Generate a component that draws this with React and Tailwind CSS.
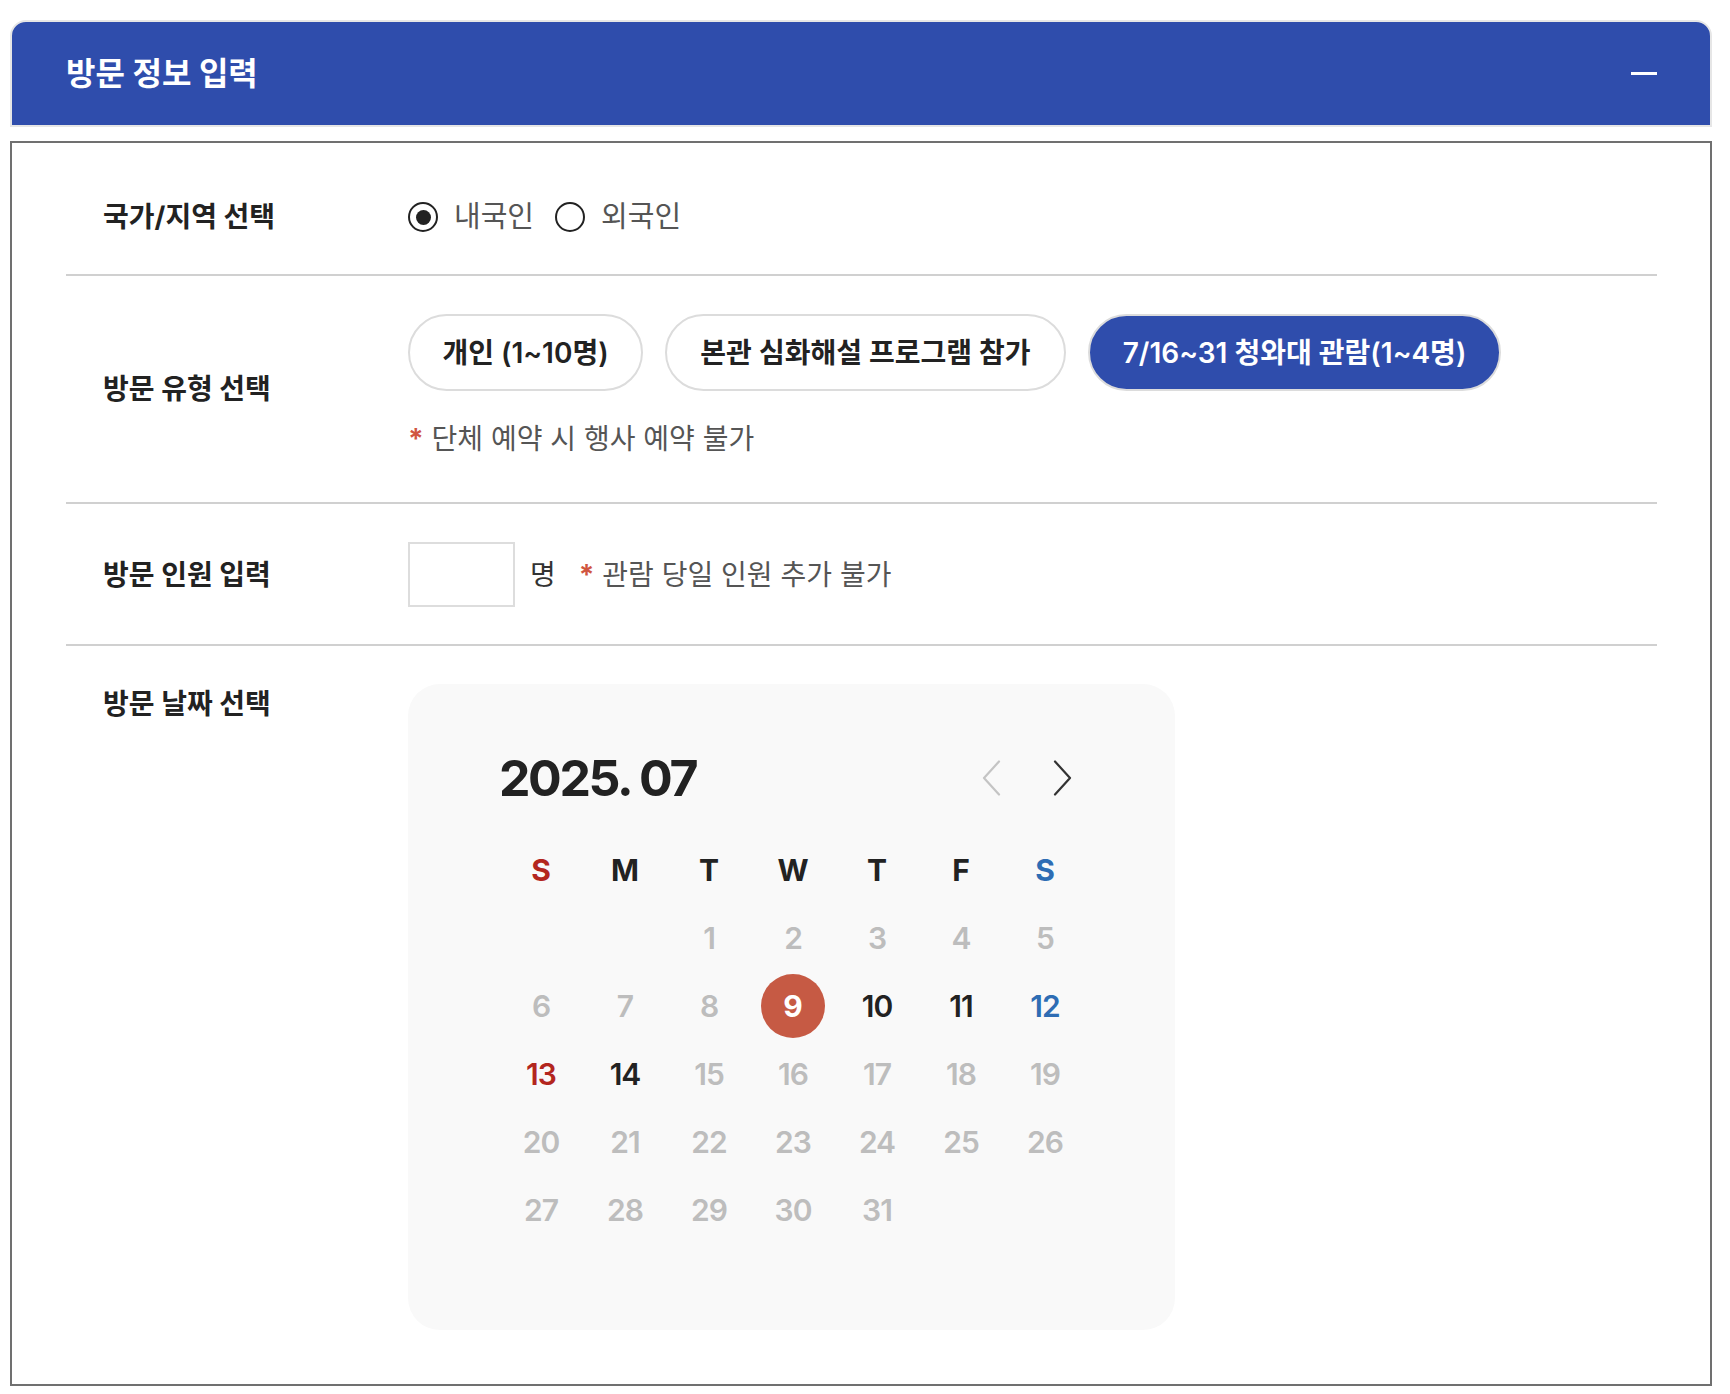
import React from "react";

function ChevronLeft({ className }) {
  return (
    <svg width="20" height="36" viewBox="0 0 20 36" fill="none" className={className}>
      <path d="M18 1.5 L3 18 L18 34.5" stroke="currentColor" strokeWidth="2.2" strokeLinecap="round" strokeLinejoin="round" />
    </svg>
  );
}

function ChevronRight({ className }) {
  return (
    <svg width="20" height="36" viewBox="0 0 20 36" fill="none" className={className}>
      <path d="M2 1.5 L17 18 L2 34.5" stroke="currentColor" strokeWidth="2.2" strokeLinecap="round" strokeLinejoin="round" />
    </svg>
  );
}

const weekdays = [
  { d: "S", c: "text-[#b3261e]" },
  { d: "M", c: "text-[#222222]" },
  { d: "T", c: "text-[#222222]" },
  { d: "W", c: "text-[#222222]" },
  { d: "T", c: "text-[#222222]" },
  { d: "F", c: "text-[#222222]" },
  { d: "S", c: "text-[#2e6db4]" },
];

function dayClass(n) {
  if (n === 10 || n === 11 || n === 14) return "text-[#222222]";
  if (n === 12) return "text-[#2e6db4]";
  if (n === 13) return "text-[#b3261e]";
  return "text-[#bdbdbd]";
}

export default function App() {
  const cells = [null, null];
  for (let i = 1; i <= 31; i++) cells.push(i);

  return (
    <div className="min-h-screen bg-white pt-[20px] font-[Inter,'Noto_Sans_CJK_KR',sans-serif]">
      <div className="ml-[10px] w-[1702px]">
        {/* Header */}
        <div className="flex h-[107px] items-center justify-between rounded-t-[16px] border-2 border-[#e6e6e6] bg-[#2f4dac] pl-[54px] pr-[53px]">
          <h2 className="text-[32px] font-bold leading-none text-white">방문 정보 입력</h2>
          <div className="h-[3px] w-[26px] bg-white" />
        </div>

        {/* Body */}
        <div className="mt-[14px] border-2 border-[#707070] pb-[16px] pl-[54px] pr-[53px] pt-[17px]">
          {/* Row 1 */}
          <div className="flex items-center border-b-2 border-[#d0d0d0] py-[38px]">
            <div className="w-[342px] shrink-0 pl-[37px] text-[28px] font-bold leading-[38px] text-[#222222]">
              국가/지역 선택
            </div>
            <div className="flex items-center">
              <span className="flex h-[30px] w-[30px] items-center justify-center rounded-full border-2 border-[#222222] bg-white">
                <span className="h-[15px] w-[15px] rounded-full bg-[#222222]" />
              </span>
              <span className="ml-[16px] text-[29px] leading-[38px] text-[#555555]">내국인</span>
              <span className="ml-[21px] h-[30px] w-[30px] rounded-full border-2 border-[#222222] bg-white" />
              <span className="ml-[16px] text-[29px] leading-[38px] text-[#555555]">외국인</span>
            </div>
          </div>

          {/* Row 2 */}
          <div className="flex items-center border-b-2 border-[#d0d0d0] py-[38px]">
            <div className="w-[342px] shrink-0 pl-[37px] text-[28px] font-bold leading-[38px] text-[#222222]">
              방문 유형 선택
            </div>
            <div className="flex flex-col">
              <div className="flex items-center gap-[22px]">
                <button className="flex h-[77px] w-[235px] items-center justify-center rounded-full border-2 border-[#dcdcdc] bg-white text-[28px] font-semibold text-[#222222]">
                  개인 (1~10명)
                </button>
                <button className="flex h-[77px] w-[401px] items-center justify-center rounded-full border-2 border-[#dcdcdc] bg-white text-[28px] font-semibold text-[#222222]">
                  본관 심화해설 프로그램 참가
                </button>
                <button className="flex h-[77px] w-[413px] items-center justify-center rounded-full border-2 border-[#dcdcdc] bg-[#2f4dac] text-[28px] font-semibold text-white">
                  7/16~31 청와대 관람(1~4명)
                </button>
              </div>
              <p className="mt-[23px] text-[28px] leading-[50px] text-[#555555]">
                <span className="font-bold text-[#d0553f]">*</span> 단체 예약 시 행사 예약 불가
              </p>
            </div>
          </div>

          {/* Row 3 */}
          <div className="flex items-center border-b-2 border-[#d0d0d0] pb-[37px] pt-[38px]">
            <div className="w-[342px] shrink-0 pl-[37px] text-[28px] font-bold leading-[38px] text-[#222222]">
              방문 인원 입력
            </div>
            <div className="flex items-center">
              <div className="h-[65px] w-[107px] border-2 border-[#dddddd] bg-white" />
              <span className="ml-[15px] text-[28px] leading-[38px] text-[#333333]">명</span>
              <span className="ml-[23px] text-[28px] leading-[38px] text-[#555555]">
                <span className="font-bold text-[#d0553f]">*</span> 관람 당일 인원 추가 불가
              </span>
            </div>
          </div>

          {/* Row 4 */}
          <div className="flex items-start py-[38px]">
            <div className="w-[342px] shrink-0 pl-[37px] text-[28px] font-bold leading-[40px] text-[#222222]">
              방문 날짜 선택
            </div>
            <div className="w-[767px] rounded-[32px] bg-[#f9f9f9] pb-[86px] pl-[91px] pr-[88px] pt-[64px]">
              <div className="flex h-[60px] items-center justify-between">
                <div className="text-[50px] font-bold leading-none tracking-[-2.4px] text-[#222222]">2025. 07</div>
                <div className="mr-[4px] flex items-center gap-[32px]">
                  <button className="flex h-[40px] w-[40px] items-center justify-center text-[#c4c4c4]">
                    <ChevronLeft />
                  </button>
                  <button className="flex h-[40px] w-[40px] items-center justify-center text-[#333333]">
                    <ChevronRight />
                  </button>
                </div>
              </div>
              <div className="mt-[28px] grid grid-cols-7">
                {weekdays.map((w, i) => (
                  <div key={i} className={`flex h-[68px] items-center justify-center text-[30px] font-bold ${w.c}`}>
                    {w.d}
                  </div>
                ))}
                {cells.map((n, i) => (
                  <div key={i} className="flex h-[68px] items-center justify-center">
                    {n === null ? null : n === 9 ? (
                      <span className="flex h-[64px] w-[64px] items-center justify-center rounded-full bg-[#c65a44] text-[30px] font-bold text-white">
                        9
                      </span>
                    ) : (
                      <span className={`text-[30px] font-semibold tracking-[-1px] ${dayClass(n)}`}>{n}</span>
                    )}
                  </div>
                ))}
              </div>
            </div>
          </div>
        </div>
      </div>
    </div>
  );
}
